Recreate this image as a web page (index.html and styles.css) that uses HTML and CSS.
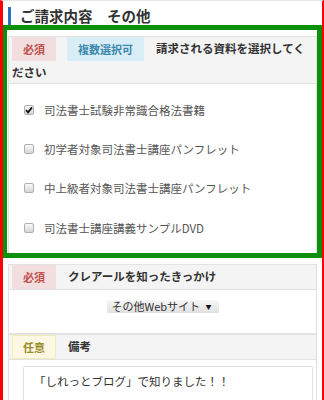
FILE: index.html
```html
<!DOCTYPE html>
<html>
  <head>
    <meta charset="utf-8">
    <link rel="stylesheet" href="styles.css">
  </head>
  <body>
    <div class="page">
      <h2 class="page-title">ご請求内容　その他</h2>

      <div class="focus-frame">
        <div class="field">
          <div class="field-head">
            <span class="tag tag-required">必須</span><span class="tag tag-multi">複数選択可</span>請求される資料を選択してください
          </div>
          <div class="field-body options">
            <label class="option">
              <span class="check checked">
                <svg width="8" height="8" viewBox="0 0 8 8"><path d="M1 4.2 L3.1 6.3 L7 1.4" fill="none" stroke="#111" stroke-width="1.8"/></svg>
              </span>
              司法書士試験非常識合格法書籍
            </label>
            <label class="option"><span class="check"></span>初学者対象司法書士講座パンフレット</label>
            <label class="option"><span class="check"></span>中上級者対象司法書士講座パンフレット</label>
            <label class="option"><span class="check"></span>司法書士講座講義サンプルDVD</label>
          </div>
        </div>
      </div>

      <div class="field">
        <div class="field-head">
          <span class="tag tag-required">必須</span>クレアールを知ったきっかけ
        </div>
        <div class="field-body select-row">
          <div class="select">その他Webサイト<span class="select-arrow">▼</span></div>
        </div>
      </div>

      <div class="field">
        <div class="field-head">
          <span class="tag tag-optional">任意</span>備考
        </div>
        <div class="field-body memo-row">
          <div class="memo">「しれっとブログ」で知りました！！</div>
        </div>
      </div>
    </div>
  </body>
</html>
```

FILE: styles.css
```css
* {
  box-sizing: border-box;
}
:root {
  font-family: "Noto Sans CJK JP", "Noto Sans", sans-serif;
}
body {
  margin: 0;
  background-color: #fff;
  color: #555;
}
.page {
  height: 400px;
  overflow: hidden;
  border-top: 1px solid #e6e6e6;
  border-left: 3px solid #f00;
  border-right: 2px solid #f00;
  padding: 0 5px;
}
.page-title {
  margin: 6px 0 0;
  height: 18px;
  border-left: 3px solid #2f6fb5;
  padding-left: 9px;
  font-size: 14.5px;
  line-height: 18px;
  font-weight: bold;
  color: #333;
}
.focus-frame {
  margin: 0 -5px 6px -6px;
  border: 5px solid #0a900a;
  padding: 6px 0 0 1px;
}
.field {
  border: 1px solid #e2e2e2;
  background-color: #fff;
}
.focus-frame .field {
  border-bottom: none;
}
.field-head {
  background-color: #f4f4f4;
  border-bottom: 1px solid #e2e2e2;
  padding: 0 3px;
  font-size: 11.5px;
  line-height: 22px;
  font-weight: bold;
  color: #333;
}
.tag {
  display: inline-block;
  vertical-align: top;
  padding: 0 11px;
  line-height: 24px;
  font-size: 11px;
  margin-right: 12px;
}
.tag-required {
  background-color: #f2dede;
  color: #c0504d;
}
.tag-multi {
  background-color: #d9edf7;
  color: #3a87ad;
}
.tag-optional {
  background-color: #fcf8e3;
  color: #9a8a2a;
  box-shadow: inset 0 0 0 1px #f3ecb8;
}
.tag-required + .tag-multi {
  margin-left: -1px;
}
.options {
  padding: 6px 0 6px;
}
.option {
  display: flex;
  align-items: center;
  height: 39.3px;
  padding-left: 15px;
  font-size: 11.5px;
  color: #555;
}
.check {
  width: 10px;
  height: 10px;
  margin-right: 10px;
  border: 1px solid #b0b0b0;
  border-radius: 2px;
  background: linear-gradient(#fafafa, #d6d6d6);
  display: flex;
  align-items: center;
  justify-content: center;
}
.select-row {
  display: flex;
  justify-content: center;
  padding: 10px 0 20px;
}
.select {
  position: relative;
  width: 112px;
  height: 13px;
  padding-left: 5px;
  background: linear-gradient(#f7f7f7, #e0e0e0);
  border-radius: 1px;
  font-size: 11px;
  line-height: 13px;
  color: #333;
}
.select-arrow {
  position: absolute;
  right: 7px;
  top: 0;
  font-size: 6px;
  line-height: 13px;
  color: #111;
}
.memo-row {
  padding: 6px 3px 0 14px;
}
.memo {
  height: 60px;
  border: 1px solid #e0e0e0;
  border-radius: 2px;
  padding: 5px 10px;
  font-size: 11.5px;
  line-height: 18px;
  color: #333;
}
```
